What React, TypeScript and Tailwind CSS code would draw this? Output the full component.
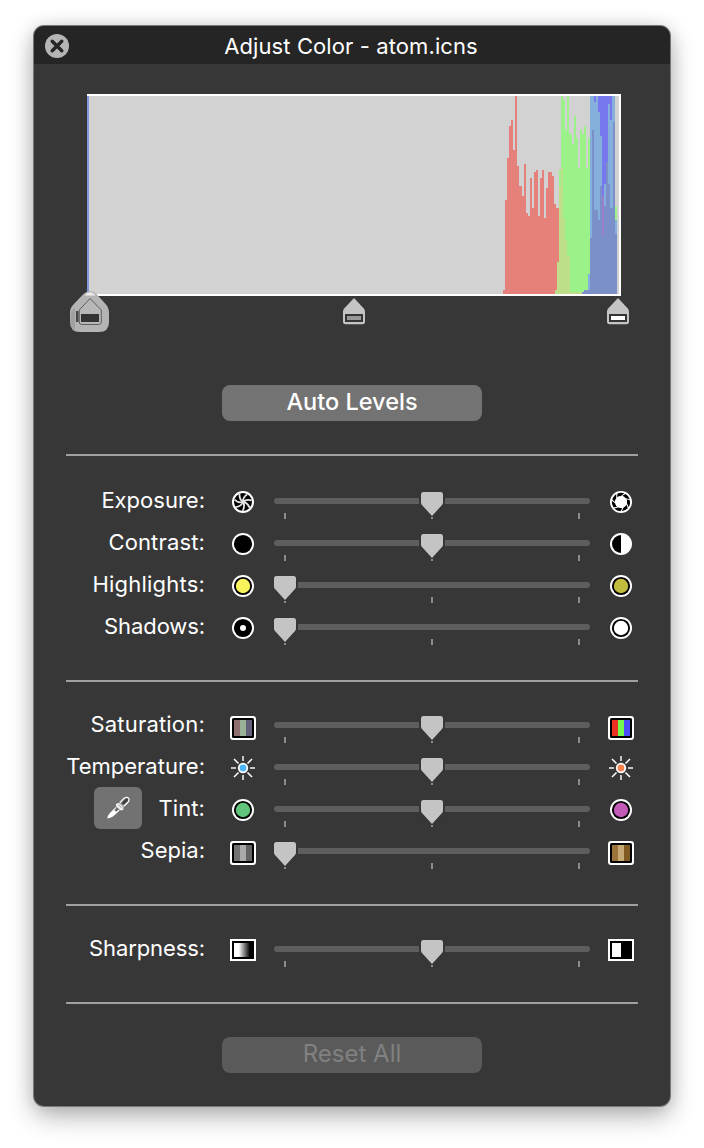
import { useState, type ReactNode } from 'react';
import clsx from 'clsx';

type SliderRow = {
  label: string;
  value: number;
  low: ReactNode;
  high: ReactNode;
  labelClass?: string;
  iconShift?: string;
  picker?: boolean;
};

// Histogram columns: [x, top, bottom?] in the 534x202 graph, each runs up to the next x
type Column = [number, number, number?];

const RED: Column[] = [
  [416, 196], [418, 106], [420, 64], [422, 32], [424, 26], [426, 56], [428, 2], [430, 72], [432, 92],
  [435, 102], [437, 70], [439, 119], [441, 122], [443, 84], [445, 114], [447, 78], [449, 76], [451, 122],
  [453, 84], [455, 76], [457, 124], [459, 94], [461, 78], [465, 82], [467, 110], [469, 114], [472, 200],
];
const GREEN: Column[] = [
  [468, 196], [470, 168], [472, 76], [474, 2], [476, 6], [478, 36], [480, 2], [482, 40], [485, 50],
  [487, 22], [489, 44], [491, 74], [493, 36], [495, 40], [497, 32], [499, 74], [501, 44], [503, 200],
];
const RED_GREEN: Column[] = [
  [468, 196], [470, 168], [472, 92], [474, 74], [476, 124], [478, 146], [480, 162], [483, 198], [498, 200],
];
const CYAN: Column[] = [[501, 180], [503, 2], [528, 126], [530, 200]];
const ALL: Column[] = [
  [495, 198], [497, 196], [503, 144], [505, 36], [507, 116], [511, 126], [513, 92], [515, 102], [517, 112],
  [519, 68], [521, 90], [523, 114], [526, 28], [528, 140], [530, 200],
];
const BLUE: Column[] = [
  [507, 2, 8], [509, 2, 2], [511, 2, 18], [513, 2, 42], [515, 2, 102], [517, 2, 90], [519, 2, 68],
  [521, 2, 10], [523, 2, 26], [525, 2, 2],
];

const LAYERS = [
  { fill: '#e6807b', columns: RED },
  { fill: '#9bf288', columns: GREEN },
  { fill: '#bfde8a', columns: RED_GREEN },
  { fill: '#85b0dc', columns: CYAN },
  { fill: '#7b90c9', columns: ALL },
  { fill: '#7878ee', columns: BLUE },
];

function columnsToPath(columns: Column[]) {
  return columns
    .slice(0, -1)
    .map(([x, top, bottom = 200], i) => `M${x} ${top}H${columns[i + 1][0]}V${bottom}H${x}Z`)
    .join('');
}

function Histogram() {
  return (
    <svg width="534" height="202" shapeRendering="crispEdges" className="block bg-[#d2d2d2]">
      {LAYERS.map((l) => (
        <path key={l.fill} d={columnsToPath(l.columns)} fill={l.fill} />
      ))}
      <path d="M515 102h2v39h-2z" fill="#9a80cc" />
      <path d="M528 112h2v14h-2z" fill="#9bf288" />
      <path d="M0 2h2v198H0z" fill="#8795dc" />
      <path d="M0 0h534v202H0v-2h532V2H0z" fill="#fff" />
    </svg>
  );
}

function LevelHandle({ fill }: { fill: string }) {
  return (
    <svg width="22" height="28" viewBox="0 0 22 28" className="block">
      <path d="M11 0L20.800 10.500Q22 11.800 22 13.500V24Q22 26.300 19.500 26.300H2.500Q0 26.300 0 24V13.500Q0 11.800 1.200 10.500Z" fill="#c4c4c4" />
      <path d="M2 16H20V24H2Z" fill="#343434" />
      <path d="M4 18H18V22H4Z" fill={fill} />
    </svg>
  );
}

function FocusedHandle() {
  return (
    <svg width="39" height="42" viewBox="0 0 39 42" className="block">
      <path d="M20 1Q23.500 1 26.500 4L36 14.500Q39 18 39 23V32Q39 42 29 42H10Q0 42 0 32V23Q0 18 3 15L13.500 4Q16.500 1 20 1Z" fill="#b4b4b4" />
      <path d="M5 17.500L1.500 21Q0.500 23 0.500 32Q0.500 38 5 40.500Z" fill="#999" fillOpacity="0.7" />
      <path d="M14.500 5.500Q20 -1 25.500 5.500H14.500Z" fill="#ececec" />
      <path d="M20 8.500L31.300 20V32Q31.300 34.500 28.800 34.500H11.700Q9.300 34.500 9.300 32V20Z" fill="#b8b8b8" stroke="#555" strokeWidth="0.9" />
      <path d="M6 21H8.500V32H6Z" fill="#454545" />
      <path d="M11 24H29V32H11Z" fill="#343434" />
    </svg>
  );
}

function Dot({ fill, size = 7.2 }: { fill: string; size?: number }) {
  return (
    <svg width="22" height="22" viewBox="0 0 22 22">
      <circle cx="11" cy="11" r="11" fill="#fff" />
      <circle cx="11" cy="11" r="9.100" fill="#000" />
      <circle cx="11" cy="11" r={size} fill={fill} />
    </svg>
  );
}

const BLADES = [0, 51.43, 102.86, 154.29, 205.71, 257.14, 308.57];

function ShutterClosed() {
  return (
    <svg width="22" height="22" viewBox="0 0 22 22">
      <circle cx="11" cy="11" r="10" fill="#000" stroke="#fff" strokeWidth="2" />
      {BLADES.map((a) => (
        <path key={a} d="M11 11Q10.500 6.500 15.200 3.200" fill="none" stroke="#e4e4e4" strokeWidth="1.800" transform={`rotate(${a} 11 11)`} />
      ))}
    </svg>
  );
}

function ShutterOpen() {
  return (
    <svg width="22" height="22" viewBox="0 0 22 22">
      <circle cx="11" cy="11" r="11" fill="#fff" />
      {BLADES.map((a) => (
        <path key={a} d="M7.600 2.500Q10.800 1.300 14.300 2.300L11 4.900Q8.800 5 7 6Z" fill="#000" transform={`rotate(${a} 11 11)`} />
      ))}
    </svg>
  );
}

function HalfDisc() {
  return (
    <svg width="22" height="22" viewBox="0 0 22 22">
      <circle cx="11" cy="11" r="11" fill="#fff" />
      <path d="M11 2A9 9 0 0 0 11 20Z" fill="#000" />
    </svg>
  );
}

function Swatch({ colors }: { colors: [string, string, string] }) {
  return (
    <svg width="26" height="24" viewBox="0 0 26 24">
      <rect width="26" height="24" rx="3" fill="#fff" />
      <rect x="2" y="2" width="22" height="20" rx="1.500" fill="#000" />
      {colors.map((c, i) => (
        <rect key={c} x={4 + i * 6} y="4" width="6" height="16" fill={c} />
      ))}
    </svg>
  );
}

function Sun({ fill }: { fill: string }) {
  return (
    <svg width="24" height="24" viewBox="0 0 24 24">
      <path d="M12 0V5M12 19V24M0 12H5M19 12H24" stroke="#c4c4c4" strokeWidth="2" />
      <path d="M3 3L7.500 7.500M21 3L16.500 7.500M3 21L7.500 16.500M21 21L16.500 16.500" stroke="#fff" strokeWidth="1.500" />
      <circle cx="12" cy="12" r="5.200" fill="#fff" />
      <circle cx="12" cy="12" r="3.400" fill={fill} />
    </svg>
  );
}

function EdgeSoft() {
  return (
    <svg width="26" height="22" viewBox="0 0 26 22">
      <defs>
        <linearGradient id="soft-edge">
          <stop offset="0.3" stopColor="#fff" />
          <stop offset="1" stopColor="#000" />
        </linearGradient>
      </defs>
      <path d="M0 0H26V22H0Z" fill="#fff" />
      <path d="M2 2H24V20H2Z" fill="#000" />
      <path d="M4 4H20V18H4Z" fill="url(#soft-edge)" />
    </svg>
  );
}

function EdgeHard() {
  return (
    <svg width="26" height="22" viewBox="0 0 26 22">
      <path d="M0 0H26V22H0Z" fill="#fff" />
      <path d="M2 2H24V20H2Z" fill="#000" />
      <path d="M4 4H13V18H4Z" fill="#fff" />
    </svg>
  );
}

function Eyedropper() {
  return (
    <svg width="24" height="24" viewBox="0 0 24 24">
      <path d="M1.300 22.500Q1.500 19.500 3.500 17.500L11 9.800L14.800 13.500L7 20.500Q4.500 22 1.300 22.500Z" fill="#fff" />
      <path d="M8.300 14L11.500 10.800L13.500 12.800L10.200 15.800Z" fill="#6a6a6a" />
      <path d="M13.500 7L18.200 2.300Q20.800 0.500 22.500 2.200Q23.800 4 22 6.200L17.200 10.800Z" fill="#6a6a6a" stroke="#fff" strokeWidth="1.300" />
      <path d="M17.500 7L21 3.600" stroke="#3c3c3c" strokeWidth="2.200" strokeLinecap="round" />
      <path d="M9.500 8.300Q10.500 6 13 6.500L18 11.300Q18.700 14 16.200 14.900Q14.500 15.200 13.200 13.800L9.900 10.600Q9 9.500 9.500 8.300Z" fill="#f2f2f2" stroke="#4c4c4c" strokeWidth="0.7" />
      <path d="M12.200 8.500L16.200 12.500" stroke="#999" strokeWidth="1" />
    </svg>
  );
}

const TONE: SliderRow[] = [
  { label: 'Exposure:', value: 50, low: <ShutterClosed />, high: <ShutterOpen /> },
  { label: 'Contrast:', value: 50, low: <Dot fill="#000" />, high: <HalfDisc />, labelClass: 'tracking-[0.15px]' },
  { label: 'Highlights:', value: 0, low: <Dot fill="#f8f35c" />, high: <Dot fill="#c1bc3d" />, labelClass: 'tracking-[0.2px]' },
  { label: 'Shadows:', value: 0, low: <Dot fill="#fff" size={3} />, high: <Dot fill="#fff" />, labelClass: 'tracking-[-0.1px]' },
];

const COLOR: SliderRow[] = [
  {
    label: 'Saturation:',
    value: 50,
    low: <Swatch colors={['#90706f', '#99b196', '#626179']} />,
    high: <Swatch colors={['#ee3125', '#73fa4d', '#4c4df5']} />,
    labelClass: 'tracking-[0.2px]',
    iconShift: 'pt-1.5',
  },
  { label: 'Temperature:', value: 50, low: <Sun fill="#4bb5fa" />, high: <Sun fill="#f38450" /> },
  { label: 'Tint:', value: 50, low: <Dot fill="#60c47a" />, high: <Dot fill="#c25ab6" />, labelClass: 'tracking-[0.1px]', picker: true },
  {
    label: 'Sepia:',
    value: 0,
    low: <Swatch colors={['#727272', '#aaaaaa', '#636363']} />,
    high: <Swatch colors={['#9c733a', '#c6a974', '#825a24']} />,
    iconShift: 'pt-1',
  },
];

const DETAIL: SliderRow[] = [
  { label: 'Sharpness:', value: 50, low: <EdgeSoft />, high: <EdgeHard />, labelClass: 'tracking-[-0.1px]' },
];

function Slider({ initial }: { initial: number }) {
  const [value, setValue] = useState(initial);

  return (
    <div className="relative h-[42px] w-[316px] pt-[18px]">
      <div className="h-1.5 rounded-full bg-[#5e5e5e]" />
      <div className="mt-[9px] flex justify-between px-2.5">
        <span className="h-1.5 w-0.5 bg-[#8c8c8c]" />
        <span className="h-1.5 w-0.5 bg-[#8c8c8c]" />
        <span className="h-1.5 w-0.5 bg-[#8c8c8c]" />
      </div>
      <div className="absolute top-3 left-[11px] h-7 w-[294px]">
        <svg width="26" height="28" viewBox="0 0 26 28" className="absolute top-0 -translate-x-1/2" style={{ left: `${value}%` }}>
          <path d="M0 0H26V13.500L14 25H12L0 13.500Z" fill="#373737" />
          <path d="M4.500 0H21.500Q24 0 24 2.500V10.500Q24 12 23 13L13 24L3 13Q2 12 2 10.500V2.500Q2 0 4.500 0Z" fill="#c4c4c4" />
        </svg>
      </div>
      <input
        type="range"
        min={0}
        max={100}
        value={value}
        onChange={(e) => setValue(Number(e.target.value))}
        className="absolute inset-0 m-0 w-full opacity-0"
      />
    </div>
  );
}

function AdjustRow({ row }: { row: SliderRow }) {
  const iconShift = row.iconShift ?? 'pt-0.5';

  return (
    <div className="flex h-[42px]">
      <div className={clsx('flex w-[139px] items-start', row.picker ? 'justify-between pl-7' : 'justify-end')}>
        {row.picker && (
          <button className="-mt-px flex h-[42px] w-12 items-center justify-center rounded-md bg-[#727272]">
            <Eyedropper />
          </button>
        )}
        <span className={clsx('pt-[5px] leading-[30px] whitespace-nowrap', row.labelClass)}>{row.label}</span>
      </div>
      <div className={clsx('ml-6 flex w-7 items-center justify-center', iconShift)}>{row.low}</div>
      <div className="ml-[17px]">
        <Slider initial={row.value} />
      </div>
      <div className={clsx('ml-[17px] flex w-7 items-center justify-center', iconShift)}>{row.high}</div>
    </div>
  );
}

function Divider() {
  return <div className="h-0.5 w-full bg-[#a0a0a0]" />;
}

export default function App() {
  return (
    <div className="h-[1148px] w-[704px] overflow-hidden bg-white px-[34px] pt-[26px] font-['Inter','Liberation_Sans',sans-serif] text-[22px] text-white">
      <div className="h-[1080px] w-[636px] overflow-hidden rounded-[10px] bg-[#373737] shadow-[0_0_0_1px_#777b78,0_10px_26px_rgba(0,0,0,0.3),0_0_18px_rgba(0,0,0,0.12)]">

        {/* Title bar */}
        <header className="flex h-[38px] items-center bg-[#252525] pl-[11px]">
          <button className="mt-px h-6 w-6">
            <svg width="24" height="24" viewBox="0 0 24 24">
              <circle cx="12" cy="12" r="12" fill="#b5b5b5" />
              <path d="M7.200 7.200L16.800 16.800M16.800 7.200L7.200 16.800" stroke="#252525" strokeWidth="3.400" strokeLinecap="round" />
            </svg>
          </button>
          <h1 className="mt-[3px] mr-[37px] flex-1 text-center text-[22px] tracking-[0.1px]">Adjust Color - atom.icns</h1>
        </header>

        <main className="px-8 pt-[30px]">

          {/* Levels */}
          <div className="pl-[21px]">
            <Histogram />
          </div>
          <div className="relative -mt-[6px] flex h-[42px] pl-1">
            <FocusedHandle />
            <div className="ml-[234px] pt-2">
              <LevelHandle fill="#979797" />
            </div>
            <div className="ml-[242px] pt-2">
              <LevelHandle fill="#fff" />
            </div>
          </div>
          <button className="mt-[53px] ml-[156px] flex h-9 w-[260px] justify-center rounded-lg bg-[#737373] pt-px text-[23.5px] leading-8 font-medium">
            Auto Levels
          </button>

          <div className="mt-[33px]">
            <Divider />
          </div>
          <section className="py-6">
            {TONE.map((row) => (
              <AdjustRow key={row.label} row={row} />
            ))}
          </section>

          <div className="mt-2">
            <Divider />
          </div>
          <section className="pt-[22px] pb-8">
            {COLOR.map((row) => (
              <AdjustRow key={row.label} row={row} />
            ))}
          </section>

          <Divider />
          <section className="pt-[22px] pb-8">
            {DETAIL.map((row) => (
              <AdjustRow key={row.label} row={row} />
            ))}
          </section>

          <Divider />
          <button className="mt-[33px] ml-[156px] flex h-9 w-[260px] justify-center rounded-lg bg-[#5a5a5a] pt-px text-[24px] leading-8 text-[#818181]">
            Reset All
          </button>
        </main>
      </div>
    </div>
  );
}
